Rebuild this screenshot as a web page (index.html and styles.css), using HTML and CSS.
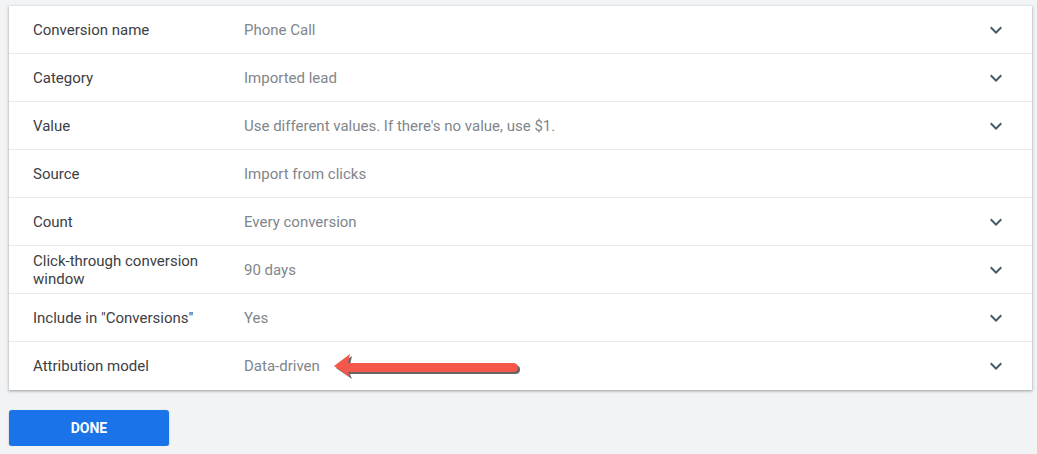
FILE: index.html
```html
<!DOCTYPE html>
<html lang="en">
<head>
    <meta charset="UTF-8">
    <meta name="viewport" content="width=device-width, initial-scale=1.0">
    <title>Conversion settings</title>
    <link rel="stylesheet" href="styles.css">
</head>
<body>
    <div class="card">
        <div class="row">
            <div class="label">Conversion name</div>
            <div class="value">Phone Call</div>
            <svg class="chevron" viewBox="0 0 24 24"><path d="M7.41 8.59L12 13.17l4.59-4.58L18 10l-6 6-6-6z"/></svg>
        </div>
        <div class="row">
            <div class="label">Category</div>
            <div class="value">Imported lead</div>
            <svg class="chevron" viewBox="0 0 24 24"><path d="M7.41 8.59L12 13.17l4.59-4.58L18 10l-6 6-6-6z"/></svg>
        </div>
        <div class="row">
            <div class="label">Value</div>
            <div class="value">Use different values. If there's no value, use $1.</div>
            <svg class="chevron" viewBox="0 0 24 24"><path d="M7.41 8.59L12 13.17l4.59-4.58L18 10l-6 6-6-6z"/></svg>
        </div>
        <div class="row">
            <div class="label">Source</div>
            <div class="value">Import from clicks</div>
        </div>
        <div class="row">
            <div class="label">Count</div>
            <div class="value">Every conversion</div>
            <svg class="chevron" viewBox="0 0 24 24"><path d="M7.41 8.59L12 13.17l4.59-4.58L18 10l-6 6-6-6z"/></svg>
        </div>
        <div class="row">
            <div class="label">Click-through conversion window</div>
            <div class="value">90 days</div>
            <svg class="chevron" viewBox="0 0 24 24"><path d="M7.41 8.59L12 13.17l4.59-4.58L18 10l-6 6-6-6z"/></svg>
        </div>
        <div class="row">
            <div class="label">Include in "Conversions"</div>
            <div class="value">Yes</div>
            <svg class="chevron" viewBox="0 0 24 24"><path d="M7.41 8.59L12 13.17l4.59-4.58L18 10l-6 6-6-6z"/></svg>
        </div>
        <div class="row last">
            <div class="label">Attribution model</div>
            <div class="value">Data-driven</div>
            <svg class="chevron" viewBox="0 0 24 24"><path d="M7.41 8.59L12 13.17l4.59-4.58L18 10l-6 6-6-6z"/></svg>
            <!-- annotation arrow -->
            <svg class="arrow" width="200" height="32" viewBox="0 0 200 32">
                <path class="arrow-shadow" d="M4 16 L20 4 L18 13 L183 13 Q188 13 188 17.5 Q188 22 183 22 L18 22 L20 27 Z"/>
                <path class="arrow-body" d="M2 14 L18 2 L16 11 L181 11 Q186 11 186 15.5 Q186 20 181 20 L16 20 L18 25 Z"/>
            </svg>
        </div>
    </div>

    <button class="btn">DONE</button>
</body>
</html>
```

FILE: styles.css
```css
body {
    margin: 0;
    padding: 6px 5px 0 9px;
    background-color: #f1f3f4;
    font-family: Roboto, 'Liberation Sans', sans-serif;
    font-size: 15px;
}
.card {
    width: 1023px;
    background-color: #fff;
    box-shadow: 0 1px 2px rgba(60, 64, 67, 0.35), 0 1px 3px 1px rgba(60, 64, 67, 0.12);
}
.row {
    position: relative;
    display: flex;
    align-items: center;
    height: 48px;
    padding: 0 24px;
    border-bottom: 1px solid #ebebeb;
    box-sizing: border-box;
}
.row.last {
    border-bottom: none;
}
.label {
    width: 180px;
    flex: none;
    margin-right: 31px;
    color: #3c4043;
    line-height: 18px;
}
.value {
    flex: 1;
    color: #80868b;
}
.chevron {
    width: 24px;
    height: 24px;
    fill: #455a64;
}
.arrow {
    position: absolute;
    left: 323px;
    top: 10px;
}
.arrow-shadow {
    fill: rgba(0, 0, 0, 0.6);
}
.arrow-body {
    fill: #f5584a;
}
.btn {
    display: block;
    margin-top: 20px;
    width: 160px;
    height: 36px;
    background-color: #1a73e8;
    color: #fff;
    border: none;
    border-radius: 3px;
    font-family: Roboto, 'Liberation Sans', sans-serif;
    font-size: 14px;
    font-weight: bold;
    box-shadow: 0 1px 2px rgba(60, 64, 67, 0.3);
    cursor: pointer;
}
```
